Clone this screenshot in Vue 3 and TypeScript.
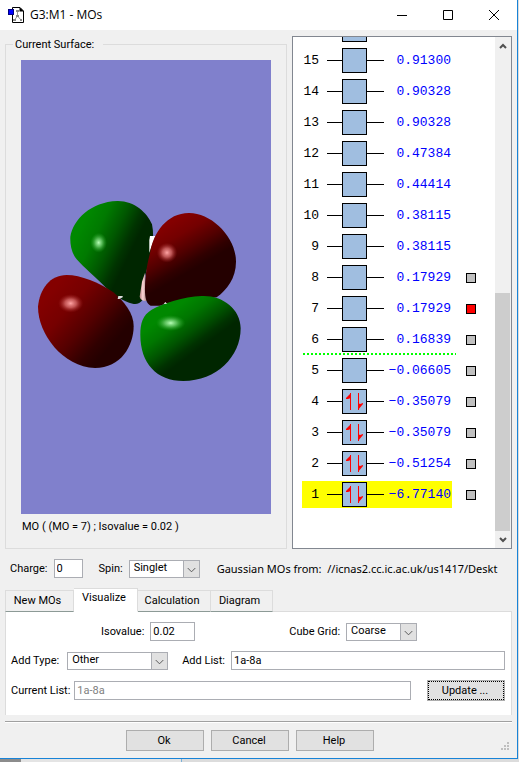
<script setup lang="ts">
import { ref } from 'vue'

interface Orbital {
  index: number
  energy: string
  occupied: boolean
  hasSurface: boolean
}

const energies = [
  '-6.77140', '-0.51254', '-0.35079', '-0.35079', '-0.06605', '0.16839', '0.17929', '0.17929',
  '0.38115', '0.38115', '0.44414', '0.47384', '0.90328', '0.90328', '0.91300', '',
]

const orbitals: Orbital[] = energies
  .map((energy, i) => ({
    index: i + 1,
    energy: energy.replace('-', '−'),
    occupied: i < 4,
    hasSurface: i < 8,
  }))
  .reverse()

const tabs = ['New MOs', 'Visualize', 'Calculation', 'Diagram']
const activeTab = ref('Visualize')
const highlighted = ref(1)
const shown = ref<number[]>([7])
const charge = ref('0')
const spin = ref('Singlet')
const isovalue = ref('0.02')
const cubeGrid = ref('Coarse')
const addType = ref('Other')
const addList = ref('1a-8a')
const currentList = ref('1a-8a')
</script>

<template>
  <div class="desktop">
    <main class="window">
      <header class="titlebar">
        <svg class="app-icon" viewBox="0 0 16 16" width="16" height="16" aria-hidden="true">
          <path d="M4.5 .5H12L15.5 4V15.5H4.5Z" fill="#fff" stroke="#000" />
          <path d="M11.5 0V4.5H16L12 .5Z" fill="#000" />
          <path d="M9.500 4V9L6.500 13M9.500 9L13 13" stroke="#999" fill="none" />
          <path d="M8 3h3v2H8zM8 8h3v2H8zM5 12h3v2H5zM12 12h2v2h-2z" fill="#888" />
          <rect x=".5" y="2.500" width="5" height="5" fill="#00f" stroke="#000080" />
        </svg>
        <h1>G3:M1 - MOs</h1>
        <div class="caption-buttons">
          <button type="button" aria-label="Minimize"><svg viewBox="0 0 12 12" width="12" height="12"><path d="M1 6.500H11" /></svg></button>
          <button type="button" aria-label="Maximize"><svg viewBox="0 0 12 12" width="12" height="12"><path d="M1.500 1.500H10.500V10.500H1.500Z" /></svg></button>
          <button type="button" aria-label="Close"><svg viewBox="0 0 12 12" width="12" height="12"><path d="M1 1L11 11M11 1L1 11" /></svg></button>
        </div>
      </header>

      <section class="upper">
        <fieldset class="surface">
          <legend>Current Surface:</legend>
          <svg class="viewer" viewBox="0 0 250 454" role="img" aria-label="Orbital surface">
            <defs>
              <linearGradient id="g1" gradientUnits="userSpaceOnUse" x1="185" y1="105" x2="336" y2="179">
                <stop offset="0" stop-color="#008800" /><stop offset=".3" stop-color="#007a00" /><stop offset=".6" stop-color="#005800" /><stop offset=".85" stop-color="#003400" /><stop offset="1" stop-color="#002600" />
              </linearGradient>
              <linearGradient id="r1" gradientUnits="userSpaceOnUse" x1="445" y1="100" x2="523" y2="236">
                <stop offset="0" stop-color="#840000" /><stop offset=".3" stop-color="#740000" /><stop offset=".6" stop-color="#520000" /><stop offset=".85" stop-color="#300000" /><stop offset="1" stop-color="#240000" />
              </linearGradient>
              <linearGradient id="r2" gradientUnits="userSpaceOnUse" x1="110" y1="285" x2="292" y2="446">
                <stop offset="0" stop-color="#840000" /><stop offset=".3" stop-color="#760000" /><stop offset=".6" stop-color="#540000" /><stop offset=".85" stop-color="#300000" /><stop offset="1" stop-color="#240000" />
              </linearGradient>
              <linearGradient id="g2" gradientUnits="userSpaceOnUse" x1="430" y1="380" x2="513" y2="494">
                <stop offset="0" stop-color="#008800" /><stop offset=".3" stop-color="#007600" /><stop offset=".6" stop-color="#005400" /><stop offset=".85" stop-color="#003200" /><stop offset="1" stop-color="#002600" />
              </linearGradient>
              <radialGradient id="hg">
                <stop offset="0" stop-color="#b8ffb8" /><stop offset=".4" stop-color="#70d070" stop-opacity=".8" /><stop offset="1" stop-color="#20a020" stop-opacity="0" />
              </radialGradient>
              <radialGradient id="hr">
                <stop offset="0" stop-color="#ffa4a4" /><stop offset=".45" stop-color="#dc7070" stop-opacity=".75" /><stop offset="1" stop-color="#a02020" stop-opacity="0" />
              </radialGradient>
              <linearGradient id="bond" x1="0" x2="1">
                <stop offset="0" stop-color="#b08080" /><stop offset=".4" stop-color="#ffd8d8" /><stop offset="1" stop-color="#806060" />
              </linearGradient>
            </defs>
            <g transform="translate(-1 130) scale(.33333)">
              <path d="M292 33C342 32 382 68 396 103C404 140 397 185 386 220L374 262L369 328C360 342 348 343 338 341C310 334 280 315 255 290C220 255 194 235 170 208C155 190 150 165 151 140C160 88 212 36 292 33Z" fill="url(#g1)" />
              <ellipse cx="236" cy="158" rx="25" ry="30" fill="url(#hg)" />
              <path d="M390 138H406L388 188V150Z" fill="#fff" />
              <path d="M375 249L366 275L359 320Q362 334 383 333L377 300Z" fill="url(#bond)" />
              <path d="M508 69C574 69 648 140 648 215C648 265 620 300 590 322L440 340L420 347H392C378 340 374 320 375 290C376 250 382 220 390 190C399 127 443 68 508 69Z" fill="url(#r1)" />
              <ellipse cx="441" cy="188" rx="31" ry="30" fill="url(#hr)" />
              <path d="M140 255C182 255 238 278 280 307C312 334 341 370 341 408C341 468 302 534 225 534C128 530 54 432 54 350C59 297 90 255 140 255Z" fill="url(#r2)" />
              <ellipse cx="152" cy="340" rx="38" ry="28" fill="url(#hr)" />
              <path d="M295 318H308V322L298 327H293Z" fill="#ddd" />
              <path d="M545 318C605 315 662 355 662 415C662 500 590 573 490 573C410 573 361 520 361 435C361 400 368 375 395 359C430 340 490 320 545 318Z" fill="url(#g2)" />
              <ellipse cx="452" cy="399" rx="44" ry="24" fill="url(#hg)" />
              <path d="M431 342L436 336L441 341Z" fill="#eee" />
            </g>
          </svg>
          <p class="caption">MO ( (MO = 7) ; Isovalue = 0.02 )</p>
        </fieldset>

        <div class="levels">
          <div class="level-list">
            <div
              v-for="o in orbitals"
              :key="o.index"
              class="level"
              :class="{ homo: o.index === 6 }"
            >
              <div class="level-main" :class="{ picked: o.index === highlighted }" @click="highlighted = o.index">
                <span class="num"><template v-if="o.energy">{{ o.index }}</template></span>
                <span class="wire left"></span>
                <span class="box">
                  <svg v-if="o.occupied" viewBox="0 0 23 23" width="23" height="23" aria-hidden="true">
                    <path d="M7.500 3V20M15.500 3V20" stroke="#f00" fill="none" />
                    <path d="M8 3V8L5 9H3V8Z" fill="#f00" />
                    <path d="M15 20V13L17 14L20 13V14Z" fill="#f00" />
                  </svg>
                </span>
                <span class="wire right"></span>
                <span class="energy">{{ o.energy }}</span>
              </div>
              <input v-if="o.hasSurface" v-model="shown" type="checkbox" :value="o.index" :aria-label="`Show surface ${o.index}`" />
            </div>
          </div>
          <div class="scrollbar">
            <button type="button" aria-label="Scroll up"><svg viewBox="0 0 8 6" width="8" height="6"><path d="M1 5L4 2L7 5" /></svg></button>
            <div class="track"><div class="thumb"></div></div>
            <button type="button" aria-label="Scroll down"><svg viewBox="0 0 8 6" width="8" height="6"><path d="M1 1L4 4L7 1" /></svg></button>
          </div>
        </div>
      </section>

      <section class="state">
        <label for="charge">Charge:</label>
        <input id="charge" v-model="charge" class="field charge" type="text" />
        <label class="spin-label" for="spin">Spin:</label>
        <span class="combo spin">
          <select id="spin" v-model="spin"><option>Singlet</option><option>Doublet</option><option>Triplet</option></select>
          <svg viewBox="0 0 16 16" aria-hidden="true"><path d="M4 7L8 11L12 7" /></svg>
        </span>
        <span class="source">Gaussian MOs from:&nbsp; //icnas2.cc.ic.ac.uk/us1417/Deskt</span>
      </section>

      <nav class="tabs" role="tablist">
        <button
          v-for="tab in tabs"
          :key="tab"
          type="button"
          role="tab"
          :aria-selected="tab === activeTab"
          :class="{ active: tab === activeTab }"
          @click="activeTab = tab"
        >{{ tab }}</button>
      </nav>

      <section class="panel">
        <div class="row first">
          <label for="iso">Isovalue:</label>
          <input id="iso" v-model="isovalue" class="field iso" type="text" />
          <label class="grid-label" for="grid">Cube Grid:</label>
          <span class="combo grid-combo">
            <select id="grid" v-model="cubeGrid"><option>Coarse</option><option>Medium</option><option>Fine</option></select>
            <svg viewBox="0 0 16 16" aria-hidden="true"><path d="M4 7L8 11L12 7" /></svg>
          </span>
        </div>
        <div class="row">
          <label for="type">Add Type:</label>
          <span class="combo type">
            <select id="type" v-model="addType"><option>Other</option><option>HOMO</option><option>LUMO</option></select>
            <svg viewBox="0 0 16 16" aria-hidden="true"><path d="M4 7L8 11L12 7" /></svg>
          </span>
          <label class="list-label" for="list">Add List:</label>
          <input id="list" v-model="addList" class="field grow" type="text" />
        </div>
        <div class="row">
          <label for="current">Current List:</label>
          <input id="current" v-model="currentList" class="field grow muted" type="text" readonly />
          <button type="button" class="push update">Update ...</button>
        </div>
      </section>

      <footer class="footer">
        <button type="button" class="push">Ok</button>
        <button type="button" class="push">Cancel</button>
        <button type="button" class="push">Help</button>
        <svg class="grip" viewBox="0 0 8 8" width="8" height="8" aria-hidden="true">
          <path d="M6 0h2v2H6zM3 3h2v2H3zM6 3h2v2H6zM0 6h2v2H0zM3 6h2v2H3zM6 6h2v2H6z" fill="#bfbfbf" />
        </svg>
      </footer>
    </main>
  </div>
</template>

<style>
body {
  margin: 0;
}
</style>

<style scoped>
* {
  box-sizing: border-box;
}
.desktop {
  height: 100vh;
  min-height: 600px;
  padding: 0 1px 3px 0;
  background: linear-gradient(90deg, #8c8c8c 0 21px, #e4e4e4 21px 181px, #7ab0d8 181px 182px, #dcdcdc 182px);
  font-family: Roboto, "Liberation Sans", sans-serif;
  font-size: 11px;
  line-height: 14px;
  color: #000;
}
.window {
  height: 100%;
  display: flex;
  flex-direction: column;
  background: #f0f0f0;
  border-right: 1px solid #1883d7;
  border-bottom: 1px solid #1883d7;
}
button,
input,
select {
  font: inherit;
  color: inherit;
  margin: 0;
  border-radius: 0;
}
.titlebar {
  height: 30px;
  flex: none;
  display: flex;
  align-items: center;
  padding-left: 8px;
  background: #fff;
}
.titlebar h1 {
  flex: 1;
  margin: 0 0 0 6px;
  font: 12px/16px "Open Sans", "Noto Sans", sans-serif;
}
.caption-buttons {
  display: flex;
}
.caption-buttons button {
  width: 46px;
  height: 30px;
  padding: 0;
  border: 0;
  background: none;
  display: grid;
  place-items: center;
}
.caption-buttons path {
  fill: none;
  stroke: #000;
}
.upper {
  flex: 1;
  min-height: 0;
  display: flex;
  gap: 5px;
  padding: 6px 5px 0;
}
.surface {
  flex: 1;
  min-width: 0;
  margin: 0;
  padding: 8px 15px 0;
  border: 1px solid #dcdcdc;
  display: flex;
  flex-direction: column;
}
.surface legend {
  margin-left: -8px;
  padding: 2px 9px 0 2px;
}
.viewer {
  flex: 1;
  min-height: 0;
  width: 100%;
  background: #8080cc;
}
.caption {
  margin: 6px 0 14px 1px;
}
.levels {
  width: 220px;
  flex: none;
  display: flex;
  background: #fff;
  border: 1px solid #828790;
}
.level-list {
  flex: 1;
  min-height: 0;
  display: flex;
  flex-direction: column;
  justify-content: flex-end;
  overflow: hidden;
  padding: 0 0 38px 9px;
}
.level {
  position: relative;
  flex: none;
  height: 31px;
  display: flex;
  align-items: center;
  gap: 14px;
}
.homo::after {
  content: "";
  position: absolute;
  left: 1px;
  bottom: 0;
  width: 153px;
  height: 2px;
  background: repeating-linear-gradient(90deg, #0f0 0 2px, transparent 2px 4px);
}
.level-main {
  width: 150px;
  height: 27px;
  display: flex;
  align-items: center;
}
.picked {
  background: #ff0;
}
.num {
  width: 17px;
  text-align: right;
  font: 13px/16px "Liberation Mono", monospace;
}
.wire {
  height: 1px;
  background: #000;
}
.left {
  width: 15px;
  margin-left: 8px;
}
.right {
  width: 17px;
}
.box {
  width: 25px;
  height: 25px;
  border: 1px solid #000;
  background: #a0bee0;
}
.box svg {
  display: block;
}
.energy {
  flex: 1;
  padding-right: 1px;
  text-align: right;
  white-space: nowrap;
  color: #00f;
  font: 13px/16px "Liberation Mono", monospace;
}
.level input {
  appearance: none;
  width: 10px;
  height: 10px;
  border: 1px solid #000;
  background: #c0c0c0;
}
.level input:checked {
  background: #f00;
}
.scrollbar {
  width: 16px;
  display: flex;
  flex-direction: column;
  background: #f0f0f0;
}
.scrollbar button {
  height: 17px;
  padding: 0;
  border: 0;
  background: none;
  display: grid;
  place-items: center;
}
.scrollbar path {
  fill: none;
  stroke: #505050;
  stroke-width: 2;
}
.track {
  flex: 1;
  display: flex;
  align-items: flex-end;
}
.thumb {
  width: 15px;
  height: 50%;
  background: #cdcdcd;
}
.state {
  display: flex;
  align-items: center;
  padding: 10px 10px 0;
  white-space: nowrap;
}
.field {
  height: 19px;
  min-width: 0;
  padding: 0 2px;
  border: 1px solid #abadb3;
  background: #fff;
}
.charge {
  width: 29px;
  margin-left: 6px;
}
.spin-label {
  margin-left: 16px;
}
.combo {
  position: relative;
  display: flex;
  height: 18px;
}
.combo select {
  appearance: none;
  width: 100%;
  padding: 0 18px 1px 4px;
  border: 1px solid #abadb3;
  background: #fff;
}
.combo svg {
  position: absolute;
  top: 1px;
  right: 1px;
  width: 16px;
  height: 16px;
  background: #e1e1e1;
  border-left: 1px solid #abadb3;
  pointer-events: none;
}
.combo path {
  fill: none;
  stroke: #505050;
}
.spin {
  width: 71px;
  margin-left: 6px;
}
.source {
  margin-left: 17px;
  font: 11px/16px "Noto Sans", sans-serif;
}
.tabs {
  display: flex;
  align-items: flex-end;
  margin: 10px 5px 0;
  height: 24px;
  background: linear-gradient(#dcdcdc, #dcdcdc) bottom / 100% 1px no-repeat;
}
.tabs button {
  height: 22px;
  padding: 0 8px;
  border: 1px solid #dcdcdc;
  border-left: 0;
  border-bottom-color: #8c9a96;
  background: #f0f0f0;
}
.tabs button:first-child {
  width: 69px;
  padding: 0 8px 0 4px;
  border-left: 1px solid #dcdcdc;
}
.tabs button:nth-child(3) {
  width: 73px;
  padding: 0 10px 0 6px;
}
.tabs button:nth-child(4) {
  width: 62px;
  padding: 0 10px 0 6px;
}
.tabs .active {
  width: 64px;
  height: 24px;
  padding: 0 12px 4px 8px;
  background: #fff;
  border-bottom-color: #fff;
}
.panel {
  margin: 0 5px;
  padding: 10px 6px 14px 5px;
  display: flex;
  flex-direction: column;
  gap: 10px;
  background: #fff;
  border: solid #dcdcdc;
  border-width: 0 1px;
}
.row {
  display: flex;
  align-items: center;
  white-space: nowrap;
}
.first {
  padding-left: 90px;
}
.iso {
  width: 45px;
  margin-left: 6px;
}
.grid-label {
  margin-left: 94px;
}
.grid-combo {
  width: 71px;
  margin-left: 6px;
}
.type {
  width: 101px;
  margin-left: 8px;
}
.list-label {
  margin-left: 14px;
}
.grow {
  flex: 1;
  margin-left: 6px;
}
.muted {
  margin-left: 4px;
  color: #808080;
}
.push {
  width: 78px;
  height: 21px;
  padding: 0 2px 0 0;
  border: 1px solid #adadad;
  background: #e1e1e1;
}
.update {
  margin-left: 16px;
  outline: 1px dotted #000;
  outline-offset: -2px;
}
.footer {
  position: relative;
  display: flex;
  gap: 7px;
  margin: 6px 5px 0;
  padding: 8px 0 7px 121px;
  border-top: 1px solid #a0a0a0;
  box-shadow: inset 0 1px #fff;
}
.grip {
  position: absolute;
  right: 3px;
  bottom: 8px;
}
</style>
